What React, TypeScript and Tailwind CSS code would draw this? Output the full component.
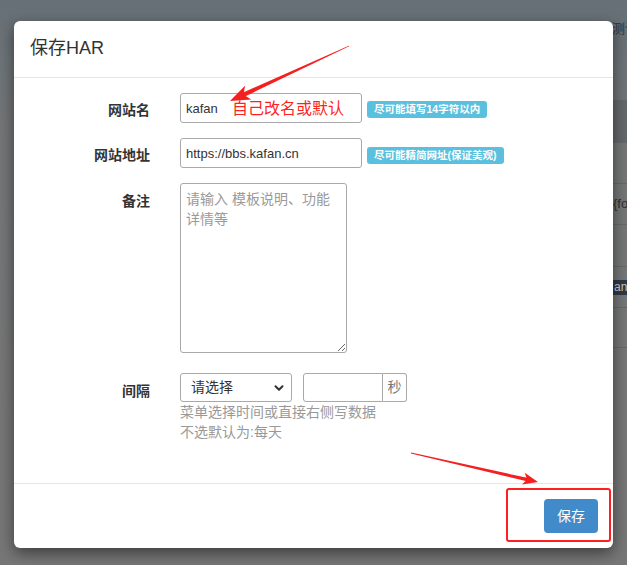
import React from "react";
import { ChevronDown } from "lucide-react";

type Pt = [number, number];

function Arrow({ t, p, headLen, headHalf, shaft }: { t: Pt; p: Pt; headLen: number; headHalf: number; shaft: number }) {
  const dx = p[0] - t[0];
  const dy = p[1] - t[1];
  const L = Math.hypot(dx, dy);
  const ux = dx / L;
  const uy = dy / L;
  const nx = -uy;
  const ny = ux;
  const bx = p[0] - ux * headLen;
  const by = p[1] - uy * headLen;
  const sx = p[0] - ux * headLen * 0.6;
  const sy = p[1] - uy * headLen * 0.6;
  const notchX = bx + ux * headLen * 0.25;
  const notchY = by + uy * headLen * 0.25;
  const shaftPts = [
    [t[0] + nx * 0.4, t[1] + ny * 0.4],
    [sx + nx * shaft, sy + ny * shaft],
    [sx - nx * shaft, sy - ny * shaft],
    [t[0] - nx * 0.4, t[1] - ny * 0.4],
  ]
    .map((q) => q.join(","))
    .join(" ");
  const headPts = [
    [p[0], p[1]],
    [bx + nx * headHalf, by + ny * headHalf],
    [notchX, notchY],
    [bx - nx * headHalf, by - ny * headHalf],
  ]
    .map((q) => q.join(","))
    .join(" ");
  return (
    <g fill="#f41f1f">
      <polygon points={shaftPts} />
      <polygon points={headPts} />
    </g>
  );
}

const cjk = "font-['Liberation_Sans','Noto_Sans_CJK_SC',sans-serif]";

export default function App() {
  return (
    <div
      className={`relative w-[627px] h-[565px] overflow-hidden bg-[linear-gradient(180deg,#677077_0px,#6d7479_60px,#757677_140px,#777777_100%)] ${cjk}`}
    >
      {/* underlying page (dimmed) */}
      <div className="flex flex-col">
        <div className="h-[100px] pl-[612px] pt-[21px] text-[13px] leading-[16px] text-[#2f3236] whitespace-nowrap">
          测试
        </div>
        <div className="ml-[560px] flex flex-col">
          <div className="h-[43px] bg-[#65686b]" />
          <div className="h-[41px] border-b border-[#686868]" />
          <div className="h-[41px] border-b border-[#686868] flex items-center pl-[53px] text-[13px] text-[#2e3034]">
            {"{fo"}
          </div>
          <div className="h-[42px] border-b border-[#686868]" />
          <div className="h-[41px] border-b border-[#686868] flex items-center pl-[52px]">
            <span className="h-[15px] px-[2px] bg-[#2d3947] text-[#c8ccd2] text-[12px] leading-[15px]">ani</span>
          </div>
          <div className="h-[40px] border-b border-[#686868]" />
        </div>
      </div>

      {/* modal */}
      <div className="absolute left-[14px] top-[21px] w-[599px] h-[527px] bg-white rounded-[6px] shadow-[0_5px_15px_rgba(0,0,0,0.5)] flex flex-col">
        <div className="h-[57px] border-b border-[#e5e5e5] px-[16px] pb-[3px] flex items-center">
          <h4 className="text-[18px] leading-[20px] text-[#333]">保存HAR</h4>
        </div>

        <div className="flex-1 px-[15px] pt-[15px] text-[#333]">
          {/* row 1 */}
          <div className="flex items-start">
            <div className="w-[121px] text-right pt-[7px] leading-[20px] text-[14px] font-bold">网站名</div>
            <div className="ml-[30px] flex items-center">
              <input
                readOnly
                value="kafan"
                className="w-[182px] h-[30px] border border-[#a9a9a9] rounded-[3px] pl-[5px] text-[13px] text-[#333] outline-none"
              />
              <span className="ml-[5px] mt-[3px] h-[17px] px-[7px] flex items-center rounded-[3px] bg-[#5bc0de] text-white text-[10.5px] font-bold leading-none whitespace-nowrap">
                尽可能填写14字符以内
              </span>
            </div>
          </div>

          {/* row 2 */}
          <div className="flex items-start mt-[15px]">
            <div className="w-[121px] text-right pt-[7px] leading-[20px] text-[14px] font-bold">网站地址</div>
            <div className="ml-[30px] flex items-center">
              <input
                readOnly
                value="https://bbs.kafan.cn"
                className="w-[182px] h-[30px] border border-[#a9a9a9] rounded-[3px] pl-[5px] text-[13px] text-[#333] outline-none"
              />
              <span className="ml-[5px] mt-[5px] h-[17px] px-[7px] flex items-center rounded-[3px] bg-[#5bc0de] text-white text-[10.5px] font-bold leading-none whitespace-nowrap">
                尽可能精简网址(保证美观)
              </span>
            </div>
          </div>

          {/* row 3 */}
          <div className="flex items-start mt-[15px]">
            <div className="w-[121px] text-right pt-[8px] leading-[20px] text-[14px] font-bold">备注</div>
            <div className="ml-[30px] flex">
              <textarea
                placeholder="请输入 模板说明、功能详情等"
                className="w-[167px] h-[170px] border border-[#a9a9a9] rounded-[3px] px-[5px] pt-[5px] text-[14px] leading-[20px] text-[#333] placeholder:text-[#9a9a9a] outline-none resize-y"
              />
            </div>
          </div>

          {/* row 4 */}
          <div className="flex items-start mt-[20px]">
            <div className="w-[121px] text-right pt-[8px] leading-[20px] text-[14px] font-bold">间隔</div>
            <div className="ml-[30px] flex flex-col">
              <div className="flex items-center">
                <div className="relative w-[112px] h-[29px]">
                  <select className="appearance-none w-full h-full border border-[#a9a9a9] rounded-[3px] pl-[10px] text-[14px] text-[#333] bg-white outline-none">
                    <option>请选择</option>
                  </select>
                  <ChevronDown
                    size={14}
                    strokeWidth={3.5}
                    className="pointer-events-none absolute right-[6px] top-[8px] text-[#333]"
                  />
                </div>
                <div className="ml-[11px] flex h-[29px]">
                  <input
                    readOnly
                    className="w-[80px] h-full border border-[#a9a9a9] rounded-l-[3px] outline-none"
                  />
                  <span className="w-[24px] h-full border border-l-0 border-[#a9a9a9] rounded-r-[3px] flex items-center justify-center text-[14px] text-[#777] bg-white">
                    秒
                  </span>
                </div>
              </div>
              <div className="text-[14px] leading-[20px] text-[#999]">
                <div>菜单选择时间或直接右侧写数据</div>
                <div>不选默认为:每天</div>
              </div>
            </div>
          </div>
        </div>

        <div className="border-t border-[#e5e5e5] p-[15px] flex justify-end">
          <button className="w-[54px] h-[34px] rounded-[4px] bg-[#428bca] text-white text-[14px] leading-none">
            保存
          </button>
        </div>
      </div>

      {/* annotations */}
      <span className="absolute left-[232px] top-[101px] text-[16px] leading-[16px] text-[#ff1f1f] whitespace-nowrap">
        自己改名或默认
      </span>
      <div className="absolute left-[506px] top-[488px] w-[105px] h-[54px] border-[2.5px] border-[#ff1f1f] rounded-[3px]" />
      <svg className="absolute left-0 top-0 pointer-events-none" width="627" height="565" viewBox="0 0 627 565">
        <Arrow t={[349, 46]} p={[230, 101]} headLen={20} headHalf={7.5} shaft={2.2} />
        <Arrow t={[411, 453]} p={[538, 482]} headLen={15} headHalf={6} shaft={1.7} />
      </svg>
    </div>
  );
}
